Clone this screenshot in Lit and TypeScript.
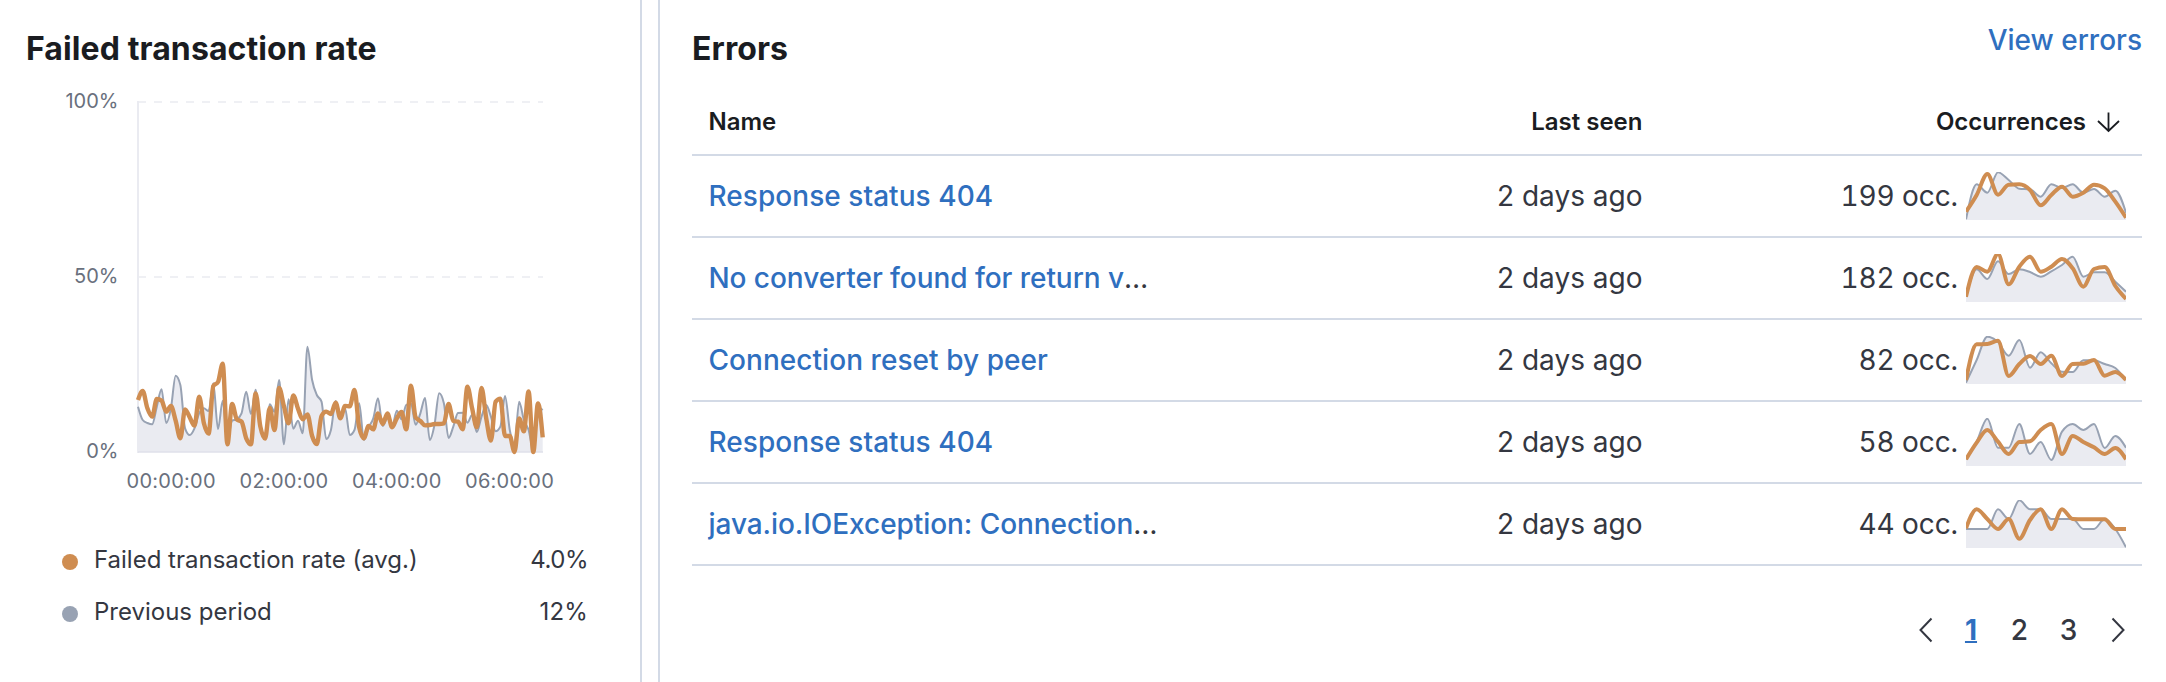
import { LitElement, html, svg, css, nothing } from "lit";
import { customElement, property } from "lit/decorators.js";

type Pt = [number, number];

/** Monotone cubic interpolation along x. */
function monotonePath(pts: Pt[]): string {
  const n = pts.length;
  const slope: number[] = [];
  for (let i = 0; i < n - 1; i++) {
    slope.push((pts[i + 1][1] - pts[i][1]) / (pts[i + 1][0] - pts[i][0]));
  }
  const m: number[] = new Array(n).fill(0);
  for (let i = 1; i < n - 1; i++) {
    const a = slope[i - 1];
    const b = slope[i];
    m[i] =
      (Math.sign(a) + Math.sign(b)) *
      Math.min(Math.abs(a), Math.abs(b), 0.5 * Math.abs((a + b) / 2));
  }
  m[0] = (3 * slope[0] - m[1]) / 2;
  m[n - 1] = (3 * slope[n - 2] - m[n - 2]) / 2;
  let d = `M${pts[0][0].toFixed(2)},${pts[0][1].toFixed(2)}`;
  for (let i = 0; i < n - 1; i++) {
    const [x0, y0] = pts[i];
    const [x1, y1] = pts[i + 1];
    const h = (x1 - x0) / 3;
    d += `C${[x0 + h, y0 + h * m[i], x1 - h, y1 - h * m[i + 1], x1, y1]
      .map((v) => v.toFixed(2))
      .join(",")}`;
  }
  return d;
}

/** Values are depths below the top of the plot, in thirds of a pixel. */
const scale = (vals: number[], x0: number, width: number, offset: number): Pt[] =>
  vals.map((v, i) => [x0 + (i * width) / (vals.length - 1), v / 3 + offset]);

const RATE = [
  210, 183, 235, 260, 207, 212, 245, 228, 272, 325, 238, 262, 287, 200, 280, 311, 168, 156, 101,
  343, 222, 268, 275, 325, 343, 190, 290, 326, 234, 300, 174, 228, 280, 196, 236, 268, 253, 318,
  342, 258, 245, 252, 218, 265, 228, 229, 180, 292, 325, 288, 298, 250, 282, 250, 292, 265, 246,
  298, 167, 262, 273, 286, 285, 282, 282, 280, 222, 273, 275, 298, 170, 235, 292, 174, 265, 332,
  215, 206, 318, 318, 366, 265, 304, 184, 366, 220, 322,
];
const PREVIOUS = [
  230, 270, 279, 283, 230, 178, 279, 235, 137, 165, 295, 315, 295, 250, 235, 243, 160, 297, 212,
  330, 272, 268, 250, 185, 252, 179, 285, 320, 223, 245, 150, 343, 208, 296, 272, 310, 50, 150,
  195, 215, 327, 300, 213, 250, 235, 315, 300, 220, 330, 292, 265, 205, 288, 265, 290, 242, 268,
  225, 220, 284, 250, 204, 330, 285, 190, 220, 324, 290, 249, 248, 278, 255, 306, 260, 225, 260,
  304, 290, 198, 300, 345, 215, 270, 300, 360, 232, 240,
];

interface ErrorRow {
  name: string;
  truncated?: boolean;
  count: string;
  top: number;
  current: number[];
  previous: number[];
}

const ROWS: ErrorRow[] = [
  {
    name: "Response status 404",
    count: "199 occ.",
    top: 36,
    current: [155, 105, 42, 104, 74, 73, 90, 136, 105, 80, 110, 98, 74, 85, 125, 173],
    previous: [178, 73, 98, 37, 60, 86, 88, 110, 73, 84, 73, 98, 87, 110, 92, 158],
  },
  {
    name: "No converter found for return v",
    truncated: true,
    count: "182 occ.",
    top: 282,
    current: [410, 321, 335, 282, 373, 320, 290, 335, 320, 297, 325, 380, 327, 321, 378, 417],
    previous: [410, 328, 357, 304, 342, 328, 336, 350, 334, 315, 290, 350, 337, 337, 365, 395],
  },
  {
    name: "Connection reset by peer",
    count: "82 occ.",
    top: 48,
    current: [180, 73, 72, 62, 168, 132, 108, 132, 107, 168, 132, 131, 120, 167, 156, 180],
    previous: [188, 120, 50, 66, 107, 60, 143, 97, 130, 155, 156, 121, 121, 132, 144, 180],
  },
  {
    name: "Response status 404",
    count: "58 occ.",
    top: 294,
    current: [418, 368, 330, 365, 402, 366, 364, 330, 312, 402, 348, 366, 382, 402, 384, 418],
    previous: [418, 365, 296, 383, 383, 312, 402, 366, 420, 335, 312, 330, 312, 384, 348, 383],
  },
  {
    name: "java.io.IOException: Connection",
    truncated: true,
    count: "44 occ.",
    top: 540,
    current: [625, 568, 597, 627, 597, 656, 600, 568, 627, 568, 597, 598, 598, 598, 627, 627],
    previous: [627, 627, 627, 568, 597, 541, 568, 568, 597, 597, 597, 627, 627, 597, 627, 682],
  },
];

@customElement("spark-line")
class SparkLine extends LitElement {
  @property({ attribute: false }) row!: ErrorRow;

  static styles = css`
    :host {
      display: block;
      width: 160px;
      height: 48px;
    }
    svg {
      display: block;
    }
  `;

  render() {
    const off = -this.row.top / 3;
    const prev = monotonePath(scale(this.row.previous, 0, 160, off));
    const cur = monotonePath(scale(this.row.current, 0, 160, off));
    return html`<svg width="160" height="48" viewBox="0 0 160 48">
      <path d="${prev}L160,48L0,48Z" fill="#eaebf1" />
      <path d=${prev} fill="none" stroke="#98a2b3" stroke-width="2" />
      <path d=${cur} fill="none" stroke="#cf8d51" stroke-width="4" />
    </svg>`;
  }
}

@customElement("rate-chart")
class RateChart extends LitElement {
  static styles = css`
    :host {
      display: block;
    }
    svg {
      display: block;
    }
    .tick {
      font: 400 20px Inter, sans-serif;
      fill: #69707d;
    }
    .time {
      letter-spacing: 0.25px;
    }
  `;

  render() {
    const prev = monotonePath(scale(PREVIOUS, 112, 404.7, 250));
    const cur = monotonePath(scale(RATE, 112, 404.7, 250));
    const times = ["00:00:00", "02:00:00", "04:00:00", "06:00:00"];
    return html`<svg width="561" height="426" viewBox="0 0 561 426">
      <path d="M112,22H517M112,197H517" stroke="#eff0f4" stroke-width="2" stroke-dasharray="8 8" />
      <path d="M112,21V373" stroke="#eaebf1" stroke-width="2" />
      <path d="${prev}L516.7,372L112,372Z" fill="#eaebf1" />
      <path d="M112,372H517" stroke="#dfe1ea" stroke-width="1.5" />
      <path d=${prev} fill="none" stroke="#98a2b3" stroke-width="2" />
      <path d=${cur} fill="none" stroke="#cf8d51" stroke-width="4.400" />
      <text class="tick" x="92.500" y="28" text-anchor="end">100%</text>
      <text class="tick" x="92.500" y="203" text-anchor="end">50%</text>
      <text class="tick" x="92.500" y="378" text-anchor="end">0%</text>
      ${times.map(
        (t, i) =>
          svg`<text class="tick time" x=${145.2 + i * 112.8} y="408" text-anchor="middle">${t}</text>`
      )}
    </svg>`;
  }
}

@customElement("app-root")
class AppRoot extends LitElement {
  static styles = css`
    :host {
      display: grid;
      grid-template-columns: 642px minmax(0, 1fr);
      column-gap: 16px;
      height: 682px;
      overflow: hidden;
      background: #fff;
      color: #343741;
      font-family: Inter, sans-serif;
      font-size: 28px;
    }
    * {
      box-sizing: border-box;
    }
    .panel {
      border: 0 solid #d3dae6;
    }
    .left {
      border-right-width: 2px;
      padding: 29px 52px 0 26px;
    }
    .right {
      border-left-width: 2px;
      padding: 20px 24px 0 32px;
    }
    .title {
      margin: 0;
      font-size: 32px;
      line-height: 40px;
      font-weight: 700;
      letter-spacing: 0.1px;
      color: #1a1c21;
    }
    .chart {
      margin-top: 11px;
    }
    .legend {
      display: flex;
      flex-direction: column;
      gap: 16px;
      padding: 36px 0 0 36px;
      font-size: 24px;
      line-height: 36px;
    }
    .item {
      display: flex;
      align-items: center;
    }
    .dot {
      width: 16px;
      height: 16px;
      margin: 3px 16px 0 0;
      border-radius: 50%;
      background: #cf8d51;
    }
    .dot.prev {
      background: #98a2b3;
    }
    .label {
      flex: 1;
    }
    .value {
      letter-spacing: -0.5px;
    }
    .value.wide {
      letter-spacing: 0.2px;
    }
    .head {
      display: flex;
      justify-content: space-between;
      height: 68px;
    }
    .head .title {
      margin-top: 9px;
    }
    .link {
      color: #2f6fbf;
      font-weight: 500;
      text-decoration: none;
    }
    .head .link {
      line-height: 40px;
    }
    .row {
      display: grid;
      grid-template-columns: 482px 484px 484px;
      align-items: center;
      height: 82px;
      border-bottom: 2px solid #d3dae6;
    }
    .row.header {
      height: 68px;
      padding-top: 2px;
      font-size: 24px;
      font-weight: 600;
      color: #1a1c21;
    }
    .cell {
      padding: 0 16px;
      line-height: 40px;
      white-space: nowrap;
    }
    .name {
      padding-right: 0;
      padding-left: 16.5px;
    }
    .name .link {
      letter-spacing: 0.05px;
    }
    .name .link.cut {
      letter-spacing: -0.06px;
    }
    .end {
      display: flex;
      justify-content: flex-end;
      align-items: center;
      gap: 8px;
    }
    .seen {
      padding-right: 15.5px;
    }
    .count {
      font-variant-numeric: tabular-nums;
      letter-spacing: -0.1px;
    }
    .sort {
      padding-right: 17px;
      gap: 7px;
    }
    .pager {
      display: flex;
      justify-content: flex-end;
      align-items: center;
      margin-top: 44px;
      padding-right: 8px;
      height: 40px;
      font-weight: 500;
    }
    .pages {
      display: flex;
      margin: 0 9px 0 5px;
    }
    .page {
      width: 49px;
      text-align: center;
    }
    .page.on {
      color: #2f6fbf;
      font-weight: 700;
      width: 48px;
      text-decoration: underline;
      text-decoration-thickness: 2px;
    }
    svg {
      display: block;
    }
  `;

  render() {
    return html`
      <section class="panel left">
        <h2 class="title">Failed transaction rate</h2>
        <rate-chart class="chart"></rate-chart>
        <div class="legend">
          <div class="item"><span class="dot"></span><span class="label">Failed transaction rate (avg.)</span><span class="value">4.0%</span></div>
          <div class="item"><span class="dot prev"></span><span class="label">Previous period</span><span class="value wide">12%</span></div>
        </div>
      </section>
      <section class="panel right">
        <div class="head">
          <h2 class="title">Errors</h2>
          <a class="link">View errors</a>
        </div>
        <div class="row header">
          <div class="cell name">Name</div>
          <div class="cell end seen">Last seen</div>
          <div class="cell end sort">
            Occurrences
            <svg width="32" height="32" viewBox="0 0 32 32" fill="none" stroke="#1a1c21" stroke-width="1.800">
              <path d="M15.500 6.5V25M5 15L15.500 25L26 15" />
            </svg>
          </div>
        </div>
        ${ROWS.map(
          (r) => html`<div class="row">
            <div class="cell name"><a class="link ${r.truncated ? "cut" : ""}">${r.name}</a>${r.truncated ? "…" : nothing}</div>
            <div class="cell end seen">2 days ago</div>
            <div class="cell end"><span class="count">${r.count}</span><spark-line .row=${r}></spark-line></div>
          </div>`
        )}
        <div class="pager">
          <svg width="32" height="32" viewBox="0 0 32 32" fill="none" stroke="#343741" stroke-width="2">
            <path d="M21.500 4.500L10.500 16L21.500 27.500" />
          </svg>
          <div class="pages">
            <span class="page on">1</span>
            <span class="page">2</span>
            <span class="page">3</span>
          </div>
          <svg width="32" height="32" viewBox="0 0 32 32" fill="none" stroke="#343741" stroke-width="2">
            <path d="M10.500 4.500L21.500 16L10.500 27.500" />
          </svg>
        </div>
      </section>
    `;
  }
}
